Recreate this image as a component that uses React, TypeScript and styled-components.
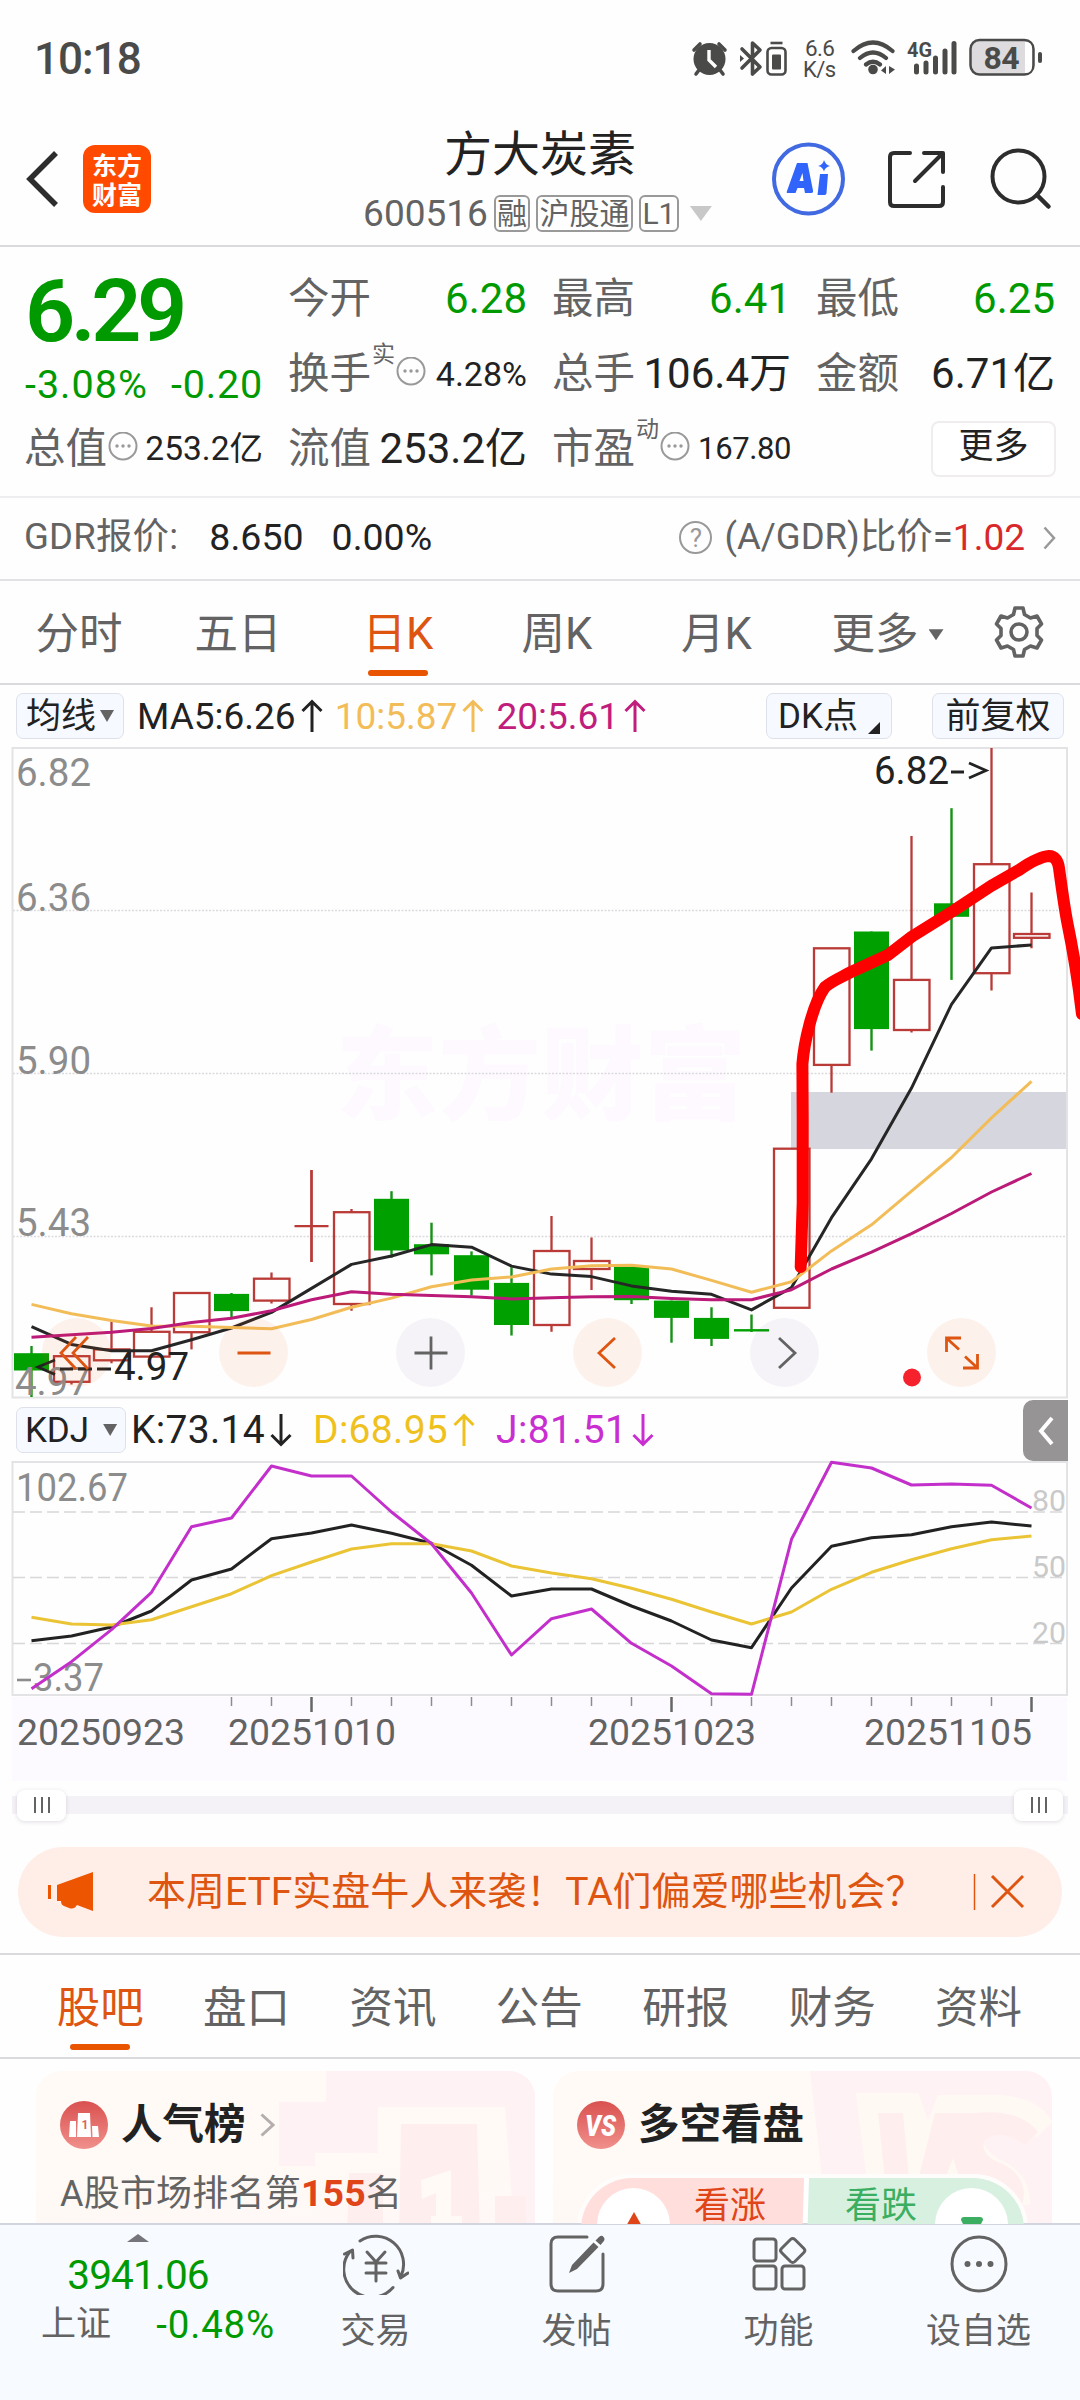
import React from "react";
import styled, { createGlobalStyle, css } from "styled-components";

const GREEN = "#009a00";
const ORANGE = "#dd5510";
const INK = "#222222";
const GREY = "#636363";
const LINE = "#dadadd";

const GlobalStyle = createGlobalStyle`
  * { box-sizing: border-box; }
  body {
    margin: 0;
    background: #fff;
    font-family: Roboto, "Noto Sans CJK SC", sans-serif;
    color: ${INK};
  }
  svg { display: block; flex: none; }
  svg text { font-family: Roboto, "Noto Sans CJK SC", sans-serif; }
`;

const Page = styled.main`
  width: 1080px;
  height: 2400px;
  display: flex;
  flex-direction: column;
  overflow: hidden;
  background: #fefefe;
  line-height: 1;
  white-space: nowrap;
`;

type TxtProps = { $size: number; $color?: string; $ls?: number; $weight?: number; $ml?: number; $dy?: number };
const Txt = styled.span<TxtProps>`
  font-size: ${(p) => p.$size}px;
  color: ${(p) => p.$color ?? INK};
  letter-spacing: ${(p) => p.$ls ?? 0}px;
  font-weight: ${(p) => p.$weight ?? 400};
  margin-left: ${(p) => p.$ml ?? 0}px;
  ${(p) => p.$dy && css`transform: translateY(${p.$dy}px);`}
  flex: none;
`;

/* ---------- status bar ---------- */
const StatusBar = styled.header`
  flex: none;
  height: 92px;
  display: flex;
  align-items: center;
  justify-content: space-between;
  padding: 26px 32px 0 34px;
`;
const StatusIcons = styled.div`
  display: flex;
  align-items: center;
`;

const StatusGlyphs = () => (
  <svg width="360" height="44" viewBox="688 37 360 44" fill="none" stroke="#4a4b49">
    <g>
      <circle cx="709.5" cy="59" r="16" fill="#4a4b49" stroke="none" />
      <path d="M694 50 L700 44 M725 50 L719 44 M699 70 L696 74 M720 70 L723 74" strokeWidth="3.6" strokeLinecap="round" />
      <path d="M709 50 V60 L716 67" stroke="#fff" strokeWidth="3.4" />
    </g>
    <path d="M742 49 L760 67 L752.500 74 V43 L760 50 L742 68" strokeWidth="3.6" strokeLinejoin="round" strokeLinecap="round" />
    <path d="M740 55 l4 3.500 l-4 3.500z" fill="#4a4b49" stroke="none" />
    <rect x="767.500" y="48" width="18" height="26.500" rx="4" strokeWidth="2.600" />
    <path d="M770.500 43 h12" strokeWidth="2.600" />
    <rect x="772" y="54.500" width="9" height="15" rx="1" fill="#4a4b49" stroke="none" />
    <text x="805" y="56" fontSize="22.500" textLength="30" fill="#4a4b49" stroke="none">6.6</text>
    <text x="803" y="77" fontSize="22" textLength="33" fill="#4a4b49" stroke="none">K/s</text>
    <path d="M853.500 51 Q873 34 892.500 51 M860 58 Q873 47 886 58 M866 64.500 Q873 59 880 64.500" strokeWidth="4.200" strokeLinecap="round" />
    <circle cx="873" cy="69.500" r="4.800" fill="#4a4b49" stroke="none" />
    <path d="M881 70.500 l5 -4.500 v8z M889 66 v8 l6 -4.500z" fill="#4a4b49" stroke="none" />
    <text x="907" y="57" fontSize="21" fontWeight="700" textLength="25" lengthAdjust="spacingAndGlyphs" fill="#4a4b49" stroke="none">4G</text>
    <path d="M916.500 66 V72 M926 63 V72 M935.500 58 V72 M945 51 V72 M954 43.500 V72" strokeWidth="5" strokeLinecap="round" />
    <rect x="970.500" y="40" width="63" height="34.500" rx="9" fill="#dedbdf" strokeWidth="2.500" />
    <path d="M1025 42 h1 q6 0 6 7 v17 q0 7 -6 7 h-1z" fill="#fefefe" stroke="none" />
    <path d="M1040 54 V61" strokeWidth="4" strokeLinecap="round" />
    <text x="983.500" y="69" fontSize="32" fontWeight="700" textLength="36" fill="#4a4b49" stroke="none">84</text>
  </svg>
);

/* ---------- title bar ---------- */
const TitleBar = styled.nav`
  flex: none;
  height: 155px;
  display: grid;
  grid-template-columns: 340px 1fr 340px;
  border-bottom: 2px solid ${LINE};
`;
const TitleLeft = styled.div`
  display: flex;
  align-items: center;
  height: 154px;
  padding: 41px 0 21px 25px;
  gap: 24px;
`;
const Logo = styled.div`
  width: 68px;
  height: 68px;
  border-radius: 12px;
  background: #ff4a00;
  color: #fff;
  font: 700 25px/29px "Noto Sans CJK SC", sans-serif;
  display: grid;
  place-content: center;
  text-align: center;
`;
const TitleCenter = styled.div`
  display: flex;
  flex-direction: column;
  align-items: center;
  padding-top: 39px;
`;
const CodeRow = styled.div`
  display: flex;
  align-items: center;
  margin: 16px 0 0 -5px;
`;
const Tag = styled.span<{ $w: number }>`
  width: ${(p) => p.$w}px;
  height: 37px;
  border: 2px solid #999;
  border-radius: 6px;
  margin-left: 6px;
  color: ${GREY};
  font-size: 30px;
  line-height: 34px;
  display: flex;
  justify-content: center;
`;
const Caret = styled.i<{ $w: number; $h: number; $color: string; $ml?: number }>`
  width: ${(p) => p.$w}px;
  height: ${(p) => p.$h}px;
  margin-left: ${(p) => p.$ml ?? 0}px;
  background: ${(p) => p.$color};
  clip-path: polygon(0 0, 100% 0, 50% 100%);
  flex: none;
`;
const TitleRight = styled.div`
  padding: 48px 0 0 28px;
`;

const HeaderIcons = () => (
  <svg width="290" height="80" viewBox="768 140 290 80" fill="none" stroke="#2d2d2d" strokeWidth="4" strokeLinecap="round">
    <circle cx="808.500" cy="179" r="34.500" stroke="#4069e2" />
    <path d="M797 163 h10.500 l5.500 27.500 q.5 2.500 -2 2.500 h-6 l-1 -5 h-6.500 l-2 5 h-7.500 q-2 0 -1 -2z M799.500 181 h4 l-1 -8z" fill="#3064fa" fillRule="evenodd" stroke="none" />
    <path d="M820 174 h8 l-1.500 19 q0 2 -2 2 h-7z M824 160 q1.500 5 6 6 q-5 1 -6 5.500 q-1.500 -5 -6 -5.500 q5 -1 6 -6z" fill="#3064fa" stroke="none" />
    <path d="M910 153 H894 q-4 0 -4 4 V202 q0 4 4 4 H939 q4 0 4 -4 V187 M924 153 H943 V172 M942 154 L915 181" strokeLinejoin="round" />
    <circle cx="1018.500" cy="176.500" r="26" />
    <path d="M1037 195 L1048.500 206.500" strokeWidth="4.500" />
  </svg>
);

/* ---------- quote panel ---------- */
const Quote = styled.section`
  flex: none;
  height: 251px;
  padding: 14px 25px 0 24px;
  display: grid;
  grid-template-columns: repeat(4, 239px);
  grid-template-rows: repeat(3, 75px);
  column-gap: 25px;
  border-bottom: 2px solid #eeeef1;
`;
const PriceCell = styled.div`
  grid-row: 1 / span 2;
  display: flex;
  flex-direction: column;
  padding: 6px 0 0 1px;
`;
const Change = styled.div`
  display: flex;
  justify-content: space-between;
  margin-top: 10px;
`;
const Cell = styled.div`
  display: flex;
  align-items: center;
`;
const Sup = styled.span`
  font-size: 23px;
  color: ${GREY};
  align-self: flex-start;
  margin: 7px 0 0 1px;
`;
const Right = styled.span`
  margin-left: auto;
  display: flex;
`;
const MoreButton = styled.button`
  margin-left: auto;
  margin-right: -1px;
  width: 125px;
  height: 56px;
  border: 2px solid #f0edef;
  border-radius: 8px;
  background: #fff;
  font: inherit;
  font-size: 35px;
  line-height: 1;
  color: ${INK};
  padding: 0 0 4px;
`;
const Dots = () => (
  <svg width="31" height="34" viewBox="-1 0 31 34">
    <circle cx="15" cy="14" r="13.500" fill="none" stroke="#999" strokeWidth="2" />
    <circle cx="9" cy="14" r="1.700" fill="#999" />
    <circle cx="15" cy="14" r="1.700" fill="#999" />
    <circle cx="21" cy="14" r="1.700" fill="#999" />
  </svg>
);

const Gdr = styled.section`
  flex: none;
  height: 83px;
  padding: 0 24px 2px 24px;
  display: flex;
  align-items: center;
  border-bottom: 2px solid #e2e2e5;
`;
const Help = styled.span`
  width: 33px;
  height: 33px;
  border: 2px solid #999;
  border-radius: 50%;
  font-size: 26px;
  line-height: 30px;
  text-align: center;
  color: #999;
  margin-right: 12px;
`;
const Chevron = ({ w, h, color, sw = 2.5 }: { w: number; h: number; color: string; sw?: number }) => (
  <svg width={w} height={h} viewBox={`0 0 ${w} ${h}`} fill="none" stroke={color} strokeWidth={sw}>
    <path d={`M1.500 1.500 L${w - 2} ${h / 2} L1.500 ${h - 1.5}`} />
  </svg>
);

/* ---------- tabs ---------- */
const Tabs = styled.nav<{ $pl: number; $top?: boolean }>`
  flex: none;
  height: ${(p) => (p.$top ? 106 : 104)}px;
  display: flex;
  padding-left: ${(p) => p.$pl}px;
  border-bottom: 2px solid ${LINE};
  border-top: ${(p) => (p.$top ? `2px solid ${LINE}` : "0")};
`;
const Tab = styled.div<{ $w: number; $on?: boolean }>`
  width: ${(p) => p.$w}px;
  display: flex;
  flex-direction: column;
  align-items: center;
  padding-top: 32px;
  font-size: 43.5px;
  color: ${(p) => (p.$on ? ORANGE : GREY)};
  &::after {
    content: "";
    width: 60px;
    height: 6px;
    margin-top: 13px;
    border-radius: 3px;
    background: ${(p) => (p.$on ? "#e85400" : "transparent")};
  }
`;
const TabInner = styled.span`
  display: flex;
  align-items: center;
`;
const GearTab = styled.div`
  width: 82px;
  display: flex;
  justify-content: center;
  padding-top: 23px;
`;

const Gear = () => (
  <svg width="56" height="56" viewBox="0 0 56 56" fill="none" stroke={GREY} strokeWidth="3.600" strokeLinejoin="round">
    <path d="M24 4 h8 l1.500 6.500 l6 3.500 l6.500 -2 l4.500 8 l-4.500 4.500 v7 l4.500 4.500 l-4.500 8 l-6.500 -2 l-6 3.500 l-1.500 6.500 h-8 l-1.500 -6.500 l-6 -3.500 l-6.500 2 l-4.500 -8 l4.500 -4.500 v-7 l-4.500 -4.500 l4.500 -8 l6.500 2 l6 -3.500z" />
    <circle cx="28" cy="28" r="8" />
  </svg>
);

/* ---------- indicator rows ---------- */
const IndicatorRow = styled.div<{ $h: number; $pt: number }>`
  flex: none;
  height: ${(p) => p.$h}px;
  padding: ${(p) => p.$pt}px 0 0 16px;
  display: flex;
  align-items: flex-start;
`;
const Values = styled.div`
  display: flex;
  align-items: center;
  height: 46px;
`;
const Pill = styled.div<{ $w: number; $end?: number }>`
  width: ${(p) => p.$w}px;
  height: 46px;
  margin-left: ${(p) => (p.$end ? "auto" : "0")};
  margin-right: ${(p) => p.$end ?? 0}px;
  background: #f6f9ff;
  border: 1.5px solid #dfe1ea;
  border-radius: 7px;
  display: flex;
  align-items: center;
  justify-content: center;
  gap: 8px;
  font-size: 35px;
  & + & { margin-left: 0; }
`;
const Corner = styled.i`
  width: 12px;
  height: 12px;
  background: ${INK};
  clip-path: polygon(100% 0, 100% 100%, 0 100%);
  align-self: flex-end;
  margin: 0 0 4px 2px;
`;
const Arrow = ({ color, down }: { color: string; down?: boolean }) => (
  <svg width="32" height="34" viewBox="-16 -17 32 34" fill="none" stroke={color} strokeWidth="3">
    <g transform={down ? "rotate(180)" : undefined}>
      <path d="M0 16 V-14 M-9.500 -5 L0 -14.500 L9.500 -5" />
    </g>
  </svg>
);
const CollapseTab = styled.div`
  margin: -7px 12px 0 auto;
  width: 45px;
  height: 61px;
  border-radius: 10px 0 0 10px;
  background: #979496;
  display: grid;
  place-items: center;
`;

/* ---------- charts ---------- */
type Candle = [up: boolean, high: number, top: number, bottom: number, low: number];
const CANDLES: Candle[] = [
  [false, 1346, 1353.2, 1370.5, 1397], [true, 1356, 1356.2, 1381.8, 1384.4], [true, 1321, 1349.4, 1360.3, 1363.3],
  [true, 1307.3, 1331.8, 1356.6, 1356.6], [true, 1293, 1293, 1332.2, 1349.4], [false, 1293, 1293.9, 1311.1, 1317.9],
  [true, 1272.4, 1278.7, 1300.6, 1303.6], [true, 1170.1, 1226.1, 1226.1, 1261.9], [true, 1208.9, 1212.2, 1304, 1310.7],
  [false, 1191.2, 1198.8, 1250.5, 1257.7], [false, 1222.7, 1244.2, 1254.3, 1275.4], [false, 1251.4, 1255.2, 1289.7, 1295.6],
  [false, 1267.3, 1282.9, 1325, 1335.5], [true, 1216, 1251, 1325, 1331.8], [true, 1237.5, 1261, 1269, 1290.1],
  [false, 1264.8, 1266.1, 1300.2, 1304], [false, 1300.6, 1300.6, 1317.9, 1342.7], [false, 1307.3, 1317.9, 1338.9, 1346],
  [false, 1314.5, 1330.1, 1330.1, 1332], [true, 1148.7, 1148.7, 1307.8, 1307.8], [true, 948.3, 948.3, 1064.9, 1092.7],
  [false, 931.5, 931.5, 1029.1, 1050.6], [true, 836, 979.9, 1030, 1032.5], [false, 808.2, 903.3, 916.8, 979.9],
  [true, 748, 864.2, 973.2, 990.4], [true, 892.4, 934, 937.8, 948.3],
];
const MA5 = [1326.7, 1344.4, 1350.7, 1350.7, 1339.7, 1328, 1312.4, 1288.4, 1264.4, 1256, 1244.6, 1247.2, 1266.1, 1274.1, 1276.6, 1285.9, 1291.3, 1294.3, 1309.9, 1287.6, 1217.7, 1158.8, 1088.1, 1004.3, 947.9, 945];
const MA10 = [1304.4, 1313.7, 1320.4, 1325.9, 1326.3, 1327.5, 1328.8, 1319.5, 1307.3, 1298.1, 1286.7, 1280, 1277, 1269, 1265.7, 1265.3, 1269, 1280.4, 1292.2, 1281.7, 1250.9, 1224.8, 1191.2, 1157.5, 1117.9, 1081.3];
const MA20 = [1337.2, 1334.7, 1332.2, 1328.4, 1322.5, 1318.3, 1310.7, 1299.8, 1291.8, 1294.3, 1295.6, 1296.8, 1298.9, 1297.7, 1296.8, 1296.4, 1298.5, 1299.8, 1299.8, 1289.7, 1269, 1252.2, 1233.7, 1213.5, 1192, 1173.5];
const K = [752, 738, 711, 663, 570, 537, 446, 429, 405, 430, 460, 526, 618, 597, 597, 648, 693, 750, 773, 594, 469, 443, 434, 410, 396, 408];
const D = [682, 702, 705, 689, 650, 611, 557, 516, 477, 461, 461, 483, 528, 549, 566, 595, 628, 666, 702, 666, 598, 547, 509, 476, 449, 438];
const J = [896, 815, 719, 607, 410, 384, 228, 258, 258, 366, 461, 609, 795, 686, 657, 760, 828, 911, 913, 448, 217, 234, 285, 282, 286, 354];

const cx = (i: number) => 31.5 + i * 40;
const line = (ys: number[], f = (v: number) => v) => ys.map((v, i) => `${cx(i)},${f(v).toFixed(1)}`).join(" ");
const kdjY = (v: number) => 1390 + v / 3;

const ChartBox = styled.section`
  flex: none;
  position: relative;
  height: 660px;
`;
const ChartTools = styled.div`
  position: absolute;
  left: 42px;
  top: 576px;
  display: flex;
  gap: 108px;
`;
const RoundTool = styled.button<{ $warm?: boolean }>`
  width: 69px;
  height: 69px;
  border: 0;
  border-radius: 50%;
  padding: 0;
  background: ${(p) => (p.$warm ? "rgba(240, 90, 20, 0.08)" : "rgba(90, 50, 130, 0.055)")};
  display: grid;
  place-items: center;
`;
const TOOLS: { warm?: boolean; d: string }[] = [
  { warm: true, d: "M-1 -16 L-16 0 L-1 16 M11 -16 L-4 0 L11 16" },
  { warm: true, d: "M-16.500 0 H16.500" },
  { d: "M-16.500 0 H16.500 M0 -16.500 V16.500" },
  { warm: true, d: "M7 -15 L-9 0 L7 15" },
  { d: "M-6 -15 L10 0 L-6 15" },
  { warm: true, d: "M-15.500 -1 V-15 H-1 M-14.500 -14 L-3 -3.500 M15.500 1 V15 H1 M14.500 14 L3 3.500" },
];

const AxisText = ({ x, y, w, children, fill = "#8c8c8c", size = 39 }: { x: number; y: number; w: number; children: string; fill?: string; size?: number }) => (
  <text x={x} y={y} fontSize={size} fill={fill} textLength={w} lengthAdjust="spacingAndGlyphs">{children}</text>
);

const CandleChart = () => (
  <svg width="1080" height="660" viewBox="0 742 1080 660" fill="none">
    <text x="336" y="1112" fontSize="102" fontWeight="900" fill="#fdf9ff" textLength="410">东方财富</text>
    <rect x="791" y="1092" width="276" height="57" fill="#d5d6de" />
    <g stroke="#dcdadf" strokeWidth="1.500" strokeDasharray="2 1.500">
      <path d="M13 910.500 H1067 M13 1073.500 H1067 M13 1236.500 H1067" />
    </g>
    <path d="M12.500 748 H1067 V1397.500 H12.500z" stroke="#e3e3e5" strokeWidth="2" />
    {CANDLES.map(([up, high, top, bottom, low], i) => {
      const x = cx(i);
      if (up) {
        return (
          <g key={i} stroke="#b93a36" strokeWidth="2.300">
            <path d={`M${x} ${high} V${top} M${x} ${bottom} V${low}`} />
            {top === bottom ? <path d={`M${x - 17} ${top} H${x + 17} M${x} ${high} V${low}`} /> : <rect x={x - 17.5} y={top} width="35.500" height={bottom - top} />}
          </g>
        );
      }
      return (
        <g key={i}>
          <path d={`M${x} ${high} V${low}`} stroke="#149314" strokeWidth="2.400" />
          <rect x={x - 17.5} y={top - (top === bottom ? 1 : 0)} width="35" height={Math.max(bottom - top, 2.4)} fill="#00a000" />
        </g>
      );
    })}
    <g strokeWidth="3" strokeLinejoin="round">
      <polyline points={line(MA5)} stroke="#262626" />
      <polyline points={line(MA10)} stroke="#f2bd58" />
      <polyline points={line(MA20)} stroke="#bb1a78" />
    </g>
    <AxisText x={16} y={786} w={75}>6.82</AxisText>
    <AxisText x={16} y={911} w={75}>6.36</AxisText>
    <AxisText x={16} y={1074} w={75}>5.90</AxisText>
    <AxisText x={16} y={1236} w={75}>5.43</AxisText>
    <AxisText x={15} y={1395} w={75}>4.97</AxisText>
    <AxisText x={114} y={1380} w={75} fill={INK}>4.97</AxisText>
    <path d="M55 1360 L38 1367 L55 1374.500 M60 1369 H73 M78 1369 H92 M97 1369 H111" stroke={INK} strokeWidth="2.800" />
    <AxisText x={874} y={784} w={75} fill={INK}>6.82</AxisText>
    <path d="M951 772 H964 M969 763 L986 770.500 L969 778" stroke={INK} strokeWidth="2.800" />
    <circle cx="912" cy="1377.500" r="9" fill="#f5222d" />
    <path
      d="M800.700 1267 L802.700 1203 V1119 L802.400 1064 C804 1044 812 1005 825 987 C832 981 842 977 850 972.500 L888 955 L912 936.500 L953 911 L991 886 L1019 870 C1032 861 1042 856.500 1049 856 C1055 856 1058 861 1059 868 C1062 890 1064 905 1067 921 C1073 950 1078 980 1082 1014"
      stroke="#ff0000" strokeWidth="12" strokeLinecap="round" strokeLinejoin="round"
    />
  </svg>
);

const KdjChart = () => (
  <svg width="1080" height="327" viewBox="0 1458 1080 327" fill="none">
    <rect x="12" y="1697" width="1055" height="84" fill="#fdfaff" />
    <path d="M12.500 1462 H1067 V1695 H12.500z" stroke="#e3e3e5" strokeWidth="2" />
    <path d="M13 1512 H1067 M13 1577.500 H1067 M13 1643.500 H1067" stroke="#d8d8da" strokeWidth="1.500" strokeDasharray="12 5" />
    <AxisText x={16} y={1500.5} w={112} size={38}>102.67</AxisText>
    <path d="M17 1680 H31" stroke="#8c8c8c" strokeWidth="2.600" />
    <AxisText x={33} y={1691} w={71} size={38}>3.37</AxisText>
    <AxisText x={1032} y={1511} w={34} size={29} fill="#c9c9c9">80</AxisText>
    <AxisText x={1032} y={1577} w={34} size={29} fill="#c9c9c9">50</AxisText>
    <AxisText x={1032} y={1643} w={34} size={29} fill="#c9c9c9">20</AxisText>
    <g strokeWidth="3" strokeLinejoin="round">
      <polyline points={line(K, kdjY)} stroke="#222" />
      <polyline points={line(D, kdjY)} stroke="#eac435" />
      <polyline points={line(J, kdjY)} stroke="#c32fcb" />
    </g>
    {CANDLES.map((_, i) => {
      const major = i === 7 || i === 16 || i === 25;
      return i > 4 ? <path key={i} d={`M${cx(i)} 1697 V${major ? 1712 : 1706}`} stroke={major ? "#666" : "#8c8c8c"} strokeWidth={major ? 2.5 : 1.5} /> : null;
    })}
    <AxisText x={17} y={1745} w={168} size={37} fill={GREY}>20250923</AxisText>
    <AxisText x={228} y={1745} w={168} size={37} fill={GREY}>20251010</AxisText>
    <AxisText x={588} y={1745} w={168} size={37} fill={GREY}>20251023</AxisText>
    <AxisText x={864} y={1745} w={168} size={37} fill={GREY}>20251105</AxisText>
  </svg>
);

/* ---------- range slider ---------- */
const SliderRow = styled.div`
  flex: none;
  height: 40px;
  margin: 0 12px;
  padding: 0 5px;
  display: flex;
  justify-content: space-between;
  align-items: center;
  background: linear-gradient(#f5f2f7, #f5f2f7) center / 100% 18px no-repeat;
`;
const Handle = styled.div`
  width: 49px;
  height: 31px;
  border-radius: 8px;
  background: #fff;
  box-shadow: 0 1px 4px rgba(60, 40, 80, 0.16);
  display: flex;
  align-items: center;
  justify-content: center;
  gap: 5px;
  i {
    width: 2px;
    height: 16px;
    background: ${GREY};
  }
`;

/* ---------- banner ---------- */
const Banner = styled.aside`
  flex: none;
  height: 90px;
  margin: 22px 18px 16px;
  border-radius: 45px;
  background: #ffeee7;
  display: flex;
  align-items: center;
  padding: 0 37px 0 29px;
`;

/* ---------- cards ---------- */
const Cards = styled.section`
  flex: none;
  height: 165px;
  display: flex;
  gap: 18px;
  padding: 12px 28px 0 36px;
  overflow: hidden;
`;
const Card = styled.article`
  width: 499px;
  height: 260px;
  border-radius: 26px;
  background: linear-gradient(175deg, #fffaf5 35%, #fff5fa 100%);
  display: grid;
  overflow: hidden;
  > * { grid-area: 1 / 1; }
`;
const CardBody = styled.div`
  padding: 30px 24px;
`;
const CardHead = styled.div`
  display: flex;
  align-items: center;
  height: 48px;
`;
const Rank = styled.p`
  margin: 26px 0 0;
  font-size: 36px;
  letter-spacing: 0.2px;
  color: ${GREY};
  b {
    color: #df4518;
    font-size: 37.5px;
  }
`;
const Vote = styled.div`
  width: 451px;
  height: 110px;
  margin: 25px 0 0;
  border: 4px solid #fffdfc;
  border-radius: 55px;
  display: flex;
  overflow: hidden;
  background: #fff;
`;
const VoteSide = styled.div<{ $down?: boolean }>`
  width: ${(p) => (p.$down ? 218 : 225)}px;
  display: flex;
  justify-content: ${(p) => (p.$down ? "flex-end" : "flex-start")};
  padding: 10px 16px;
  gap: ${(p) => (p.$down ? 18 : 24)}px;
  font-size: 36px;
  color: ${(p) => (p.$down ? "#3cae62" : "#df4518")};
  background: ${(p) => (p.$down ? "#d8f0df" : "#ffdedb")};
  clip-path: ${(p) => (p.$down ? "polygon(3px 0, 100% 0, 100% 100%, 0 100%)" : "polygon(0 0, calc(100% - 2px) 0, calc(100% - 5px) 100%, 0 100%)")};
`;
const VoteDot = styled.div`
  width: 73px;
  height: 73px;
  border-radius: 50%;
  background: #fff;
  display: grid;
  justify-content: center;
`;

/* ---------- bottom bar ---------- */
const BottomBar = styled.footer`
  flex: none;
  height: 177px;
  margin-top: -1px;
  display: flex;
  background: #f7faff;
  border-top: 2px solid #d3d5de;
`;
const IndexCell = styled.div`
  width: 276px;
  display: flex;
  flex-direction: column;
  align-items: center;
  padding-top: 9px;
`;
const UpCaret = styled(Caret)`
  transform: rotate(180deg);
`;
const IndexLine = styled.div`
  display: flex;
  align-items: center;
  justify-content: space-between;
  width: 234px;
  margin: 14px 0 0 40px;
`;
const NavItem = styled.div<{ $w: number }>`
  width: ${(p) => p.$w}px;
  display: flex;
  flex-direction: column;
  align-items: center;
  padding-top: 8px;
  gap: 19px;
  font-size: 35px;
  color: ${GREY};
`;

const NAV = [
  {
    w: 199, label: "交易", icon: (
      <>
        <path d="M17 8 A28 28 0 0 1 58 43 M50 54.500 A28 28 0 0 1 7.500 18 M1.500 21 L9.500 17 L10 25 M65 40 L57.500 45 L55 38" />
        <path d="M24 19 L33 29 L42 19 M23 30 H43 M23 40 H43 M33 29 V48" />
      </>
    ),
  },
  {
    w: 203, label: "发帖", icon: (
      <>
        <path d="M43 4 H14 q-7 0 -7 7 V51 q0 7 7 7 H52 q7 0 7 -7 V21" />
        <path d="M55 4 q3 -2.500 4.500 0 q2 2 0 4.500 l-3 3.500 l-5 -4.500z M49.500 9.500 l5 4.500 L33 36 l-8 4 l3 -8z" fill={GREY} stroke="none" />
      </>
    ),
  },
  {
    w: 201, label: "功能", icon: (
      <>
        <rect x="8" y="6" width="22" height="22" rx="3" />
        <rect x="8" y="33" width="22" height="23" rx="3" />
        <rect x="36" y="33" width="22" height="23" rx="3" />
        <path d="M44.500 6.500 q2.200 -2 4.400 0 l9 9 q2 2 0 4 l-9 9 q-2.200 2 -4.400 0 l-9 -9 q-2 -2 0 -4z" />
      </>
    ),
  },
  {
    w: 199, label: "设自选", icon: (
      <>
        <circle cx="33" cy="31" r="27" />
        <g fill={GREY} stroke="none"><circle cx="21.500" cy="31" r="3" /><circle cx="33" cy="31" r="3" /><circle cx="44.500" cy="31" r="3" /></g>
      </>
    ),
  },
];

export default function App() {
  return (
    <>
      <GlobalStyle />
      <Page>
        <StatusBar>
          <Txt $size={44} $color="#4a4b49" $ls={-1} $weight={500}>10:18</Txt>
          <StatusIcons><StatusGlyphs /></StatusIcons>
        </StatusBar>

        <TitleBar>
          <TitleLeft>
            <svg width="34" height="58" viewBox="0 0 34 58" fill="none" stroke="#2d2d2d" strokeWidth="5.500">
              <path d="M31 3 L5 29 L31 55" />
            </svg>
            <Logo>东方<br />财富</Logo>
          </TitleLeft>
          <TitleCenter>
            <Txt $size={48}>方大炭素</Txt>
            <CodeRow>
              <Txt $size={37} $color={GREY}>600516</Txt>
              <Tag $w={36}>融</Tag>
              <Tag $w={97}>沪股通</Tag>
              <Tag $w={40}>L1</Tag>
              <Caret $w={22} $h={15} $color="#c8c8c8" $ml={11} />
            </CodeRow>
          </TitleCenter>
          <TitleRight><HeaderIcons /></TitleRight>
        </TitleBar>

        <Quote>
          <PriceCell>
            <Txt $size={88} $color={GREEN} $weight={600} $ls={-4.5}>6.29</Txt>
            <Change>
              <Txt $size={39.5} $color={GREEN} $ls={1}>-3.08%</Txt>
              <Txt $size={39.5} $color={GREEN} $ls={0.8}>-0.20</Txt>
            </Change>
          </PriceCell>
          <Cell><Txt $size={41.5} $color={GREY}>今开</Txt><Right><Txt $size={42} $color={GREEN}>6.28</Txt></Right></Cell>
          <Cell><Txt $size={41.5} $color={GREY}>最高</Txt><Right><Txt $size={42} $color={GREEN}>6.41</Txt></Right></Cell>
          <Cell><Txt $size={41.5} $color={GREY}>最低</Txt><Right><Txt $size={42} $color={GREEN}>6.25</Txt></Right></Cell>
          <Cell><Txt $size={41.5} $color={GREY}>换手</Txt><Sup>实</Sup><Dots /><Right><Txt $size={34}>4.28%</Txt></Right></Cell>
          <Cell><Txt $size={41.5} $color={GREY}>总手</Txt><Right><Txt $size={42}>106.4万</Txt></Right></Cell>
          <Cell><Txt $size={41.5} $color={GREY}>金额</Txt><Right><Txt $size={42}>6.71亿</Txt></Right></Cell>
          <Cell><Txt $size={41.5} $color={GREY}>总值</Txt><Dots /><Right><Txt $size={33.5}>253.2亿</Txt></Right></Cell>
          <Cell><Txt $size={41.5} $color={GREY}>流值</Txt><Right><Txt $size={42}>253.2亿</Txt></Right></Cell>
          <Cell><Txt $size={41.5} $color={GREY}>市盈</Txt><Sup>动</Sup><Dots /><Right><Txt $size={31} $ls={-0.4}>167.80</Txt></Right></Cell>
          <Cell><MoreButton>更多</MoreButton></Cell>
        </Quote>

        <Gdr>
          <Txt $size={36.5} $color={GREY} $ls={0.2}>GDR报价:</Txt>
          <Txt $size={37.5} $ml={31}>8.650</Txt>
          <Txt $size={37.5} $ml={28}>0.00%</Txt>
          <Right><Help>?</Help></Right>
          <Txt $size={36.5} $color={GREY}>(A/GDR)比价=</Txt>
          <Txt $size={37} $color="#d8282c">1.02</Txt>
          <Txt $size={20} $ml={18}><Chevron w={13} h={24} color="#999" /></Txt>
        </Gdr>

        <Tabs $pl={0}>
          <Tab $w={158}>分时</Tab>
          <Tab $w={160}>五日</Tab>
          <Tab $w={160} $on>日K</Tab>
          <Tab $w={158}>周K</Tab>
          <Tab $w={161}>月K</Tab>
          <Tab $w={181}><TabInner>更多<Caret $w={15} $h={11} $color={GREY} $ml={10} /></TabInner></Tab>
          <GearTab><Gear /></GearTab>
        </Tabs>

        <IndicatorRow $h={57} $pt={8}>
          <Pill $w={108}>均线<Caret $w={14} $h={12} $color={GREY} $ml={-4} /></Pill>
          <Values>
            <Txt $size={37} $ml={13}>MA5:6.26</Txt><Arrow color={INK} />
            <Txt $size={37} $color="#f2bd58" $ml={7}>10:5.87</Txt><Arrow color="#f2bd58" />
            <Txt $size={37} $color="#c01d7c" $ml={7}>20:5.61</Txt><Arrow color="#c01d7c" />
          </Values>
          <Pill $w={126} $end={40}>DK点<Corner /></Pill>
          <Pill $w={132} $end={16}>前复权</Pill>
        </IndicatorRow>

        <ChartBox>
          <CandleChart />
          <ChartTools>
            {TOOLS.map((t, i) => (
              <RoundTool key={i} $warm={t.warm}>
                <svg width="40" height="40" viewBox="-20 -20 40 40" fill="none" stroke={t.warm ? ORANGE : GREY} strokeWidth="2.800">
                  <path d={t.d} />
                </svg>
              </RoundTool>
            ))}
          </ChartTools>
        </ChartBox>

        <IndicatorRow $h={56} $pt={5}>
          <Pill $w={110}>KDJ<Caret $w={14} $h={12} $color={GREY} $ml={6} /></Pill>
          <Values>
            <Txt $size={39} $ml={5} $ls={0.3}>K:73.14</Txt><Arrow color={INK} down />
            <Txt $size={39} $color="#efc11f" $ml={16} $ls={0.3}>D:68.95</Txt><Arrow color="#efc11f" />
            <Txt $size={39} $color="#c92fd0" $ml={16} $ls={0.3}>J:81.51</Txt><Arrow color="#c92fd0" down />
          </Values>
          <CollapseTab>
            <svg width="18" height="30" viewBox="0 0 18 30" fill="none" stroke="#fff" strokeWidth="4"><path d="M15 2 L4 15 L15 28" /></svg>
          </CollapseTab>
        </IndicatorRow>
        <KdjChart />

        <SliderRow>
          <Handle><i /><i /><i /></Handle>
          <Handle><i /><i /><i /></Handle>
        </SliderRow>

        <Banner>
          <svg width="48" height="40" viewBox="0 0 48 40" fill="#ee5500">
            <path d="M46 0 V39 L30 33 q-3 5 -8 3 l-5 -2 q-3 -1 -3 -5 h-4 V13z M1 13 h3 v14 h-3z" />
          </svg>
          <Txt $size={39} $color={ORANGE} $ml={52}>本周ETF实盘牛人来袭！TA们偏爱哪些机会？</Txt>
          <Right>
            <svg width="52" height="38" viewBox="973 1873 52 38" fill="none" stroke={ORANGE}>
              <path d="M974.500 1874 V1910" strokeWidth="1.500" />
              <path d="M992 1876 L1023 1907 M1023 1876 L992 1907" strokeWidth="3" />
            </svg>
          </Right>
        </Banner>

        <Tabs $pl={27} $top>
          {["股吧", "盘口", "资讯", "公告", "研报", "财务", "资料"].map((t, i) => (
            <Tab key={t} $w={146.4} $on={i === 0}>{t}</Tab>
          ))}
        </Tabs>

        <Cards>
          <Card>
            <svg width="499" height="170" viewBox="36 2071 499 170">
              <path d="M326 2071 H535 V2241 H515 L505 2107 H378 V2153 H315 V2166 H279 V2102 H326z" fill="#fff2f5" />
              <path d="M401 2124 H477 L480 2241 H399z M349 2173 H383 V2241 H347z M495 2196 H526 V2241 H495z" fill="#ffeeee" />
              <path d="M421 2180 L451 2170 V2216 H462 V2226 H431 V2216 H436 V2193 L422 2199z" fill="#fffaf6" />
            </svg>
            <CardBody>
              <CardHead>
                <svg width="48" height="48" viewBox="0 0 48 48">
                  <defs><linearGradient id="badge" x1="0" y1="0" x2="0" y2="1"><stop offset="0" stopColor="#d9514f" /><stop offset="1" stopColor="#f0908c" /></linearGradient></defs>
                  <circle cx="24" cy="24" r="24" fill="url(#badge)" />
                  <path d="M10 20 h6 v16 h-7z M18 12 h12 l1 24 h-14z M32 25 h6 l1 11 h-6.500z" fill="#fff" />
                  <text x="21.500" y="28" fontSize="12" fontWeight="700" fill="#dd5f5c">1</text>
                </svg>
                <Txt $size={41.5} $weight={700} $ml={13}>人气榜</Txt>
                <Txt $size={20} $ml={14}><Chevron w={15} h={24} color="#b5adae" sw={3} /></Txt>
              </CardHead>
              <Rank>A股市场排名第<b>155</b>名</Rank>
            </CardBody>
          </Card>
          <Card>
            <svg width="499" height="170" viewBox="553 2071 499 170">
              <path d="M810 2071 H1052 V2241 H829z" fill="#fff2f5" />
              <path d="M856 2093 H918 L928 2120 L938 2095 H1000 Q1040 2098 1052 2122 L1036 2138 Q1010 2108 985 2125 Q975 2145 1000 2160 Q1030 2172 1030 2205 H870z" fill="#fff9f4" />
              <path d="M878 2113 H903 L910 2190 H886z M935 2113 H975 Q1020 2108 1038 2132 L1025 2145 Q1000 2128 985 2140 Q978 2155 1005 2165 Q1030 2180 1022 2205 H968 L953 2158 L940 2192 H915z" fill="#ffeeee" />
            </svg>
            <CardBody>
              <CardHead>
                <svg width="48" height="48" viewBox="0 0 48 48">
                  <circle cx="24" cy="24" r="24" fill="url(#badge)" />
                  <text x="8" y="35" fontSize="30" fontWeight="900" fontStyle="italic" fill="#fff" textLength="31" lengthAdjust="spacingAndGlyphs">VS</text>
                </svg>
                <Txt $size={41.5} $weight={700} $ml={13}>多空看盘</Txt>
              </CardHead>
              <Vote>
                <VoteSide>
                  <VoteDot><svg width="18" height="40" viewBox="0 0 18 40"><path d="M9 24 L18 40 H0z" fill="#df4518" /></svg></VoteDot>
                  看涨
                </VoteSide>
                <VoteSide $down>
                  看跌
                  <VoteDot><svg width="22" height="44" viewBox="0 0 22 44"><path d="M3 29 h16 q3 0 3 3 l-5 10 h-12 l-5 -10 q0 -3 3 -3z" fill="#3cae62" /></svg></VoteDot>
                </VoteSide>
              </Vote>
            </CardBody>
          </Card>
        </Cards>

        <BottomBar>
          <IndexCell>
            <UpCaret $w={22} $h={8} $color="#77757c" />
            <Txt $size={40.5} $color={GREEN} $ls={-0.8} $dy={13}>3941.06</Txt>
            <IndexLine>
              <Txt $size={35} $color={GREY} $dy={9}>上证</Txt>
              <Txt $size={38.5} $color={GREEN} $ls={0.8} $dy={9}>-0.48%</Txt>
            </IndexLine>
          </IndexCell>
          {NAV.map((n) => (
            <NavItem key={n.label} $w={n.w}>
              <svg width="66" height="62" viewBox="0 0 66 62" fill="none" stroke={GREY} strokeWidth="3" strokeLinecap="round" strokeLinejoin="round">{n.icon}</svg>
              {n.label}
            </NavItem>
          ))}
        </BottomBar>
      </Page>
    </>
  );
}
